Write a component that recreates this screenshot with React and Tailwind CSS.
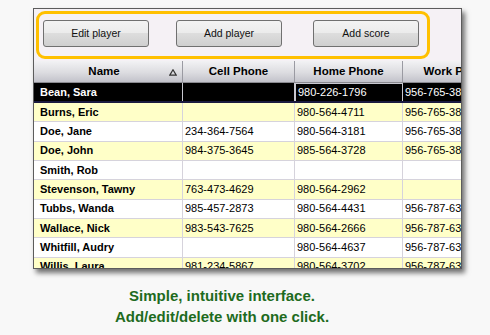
import React from "react";

const rows = [
  { name: "Bean, Sara", cell: "", home: "980-226-1796", work: "956-765-3812", selected: true },
  { name: "Burns, Eric", cell: "", home: "980-564-4711", work: "956-765-3812" },
  { name: "Doe, Jane", cell: "234-364-7564", home: "980-564-3181", work: "956-765-3812" },
  { name: "Doe, John", cell: "984-375-3645", home: "985-564-3728", work: "956-765-3812" },
  { name: "Smith, Rob", cell: "", home: "", work: "" },
  { name: "Stevenson, Tawny", cell: "763-473-4629", home: "980-564-2962", work: "" },
  { name: "Tubbs, Wanda", cell: "985-457-2873", home: "980-564-4431", work: "956-787-6390" },
  { name: "Wallace, Nick", cell: "983-543-7625", home: "980-564-2666", work: "956-787-6390" },
  { name: "Whitfill, Audry", cell: "", home: "980-564-4637", work: "956-787-6390" },
  { name: "Willis, Laura", cell: "981-234-5867", home: "980-564-3702", work: "956-787-6390" },
];

const WinButton = ({ label, className = "" }) => (
  <button className={`w-[106px] h-[27px] shrink-0 rounded-[3px] border border-[#707070] bg-[linear-gradient(to_bottom,#f3f3f3_0%,#ebebeb_50%,#dddddd_50%,#cfcfcf_100%)] text-[10.5px] text-[#111] ${className}`}>
    {label}
  </button>
);

const SortGlyph = () => (
  <svg width="8" height="7" viewBox="0 0 8 7" className="absolute right-[5px] top-[8px]">
    <path d="M4 0.8 L7.2 6.2 L0.8 6.2 Z" fill="none" stroke="#333" strokeWidth="1.2" />
  </svg>
);

export default function App() {
  return (
    <div
      className="w-[490px] h-[335px] overflow-hidden bg-[#f8f8f8] pt-[8px]"
      style={{ fontFamily: '"Liberation Sans", Arial, sans-serif' }}
    >
      {/* Window */}
      <div className="ml-[33px] w-[429px] h-[261px] border border-[#5c5c5c] shadow-[3px_4px_5px_rgba(0,0,0,0.55)] overflow-hidden flex flex-col bg-white">
        {/* Toolbar */}
        <div className="h-[52px] shrink-0 bg-[#f5f1f5] pt-[2px] pl-[2px]">
          <div className="w-[394px] h-[48px] rounded-[9px] border-[3px] border-[#ffc000] flex items-start pt-[6px] pl-[4px]">
            <WinButton label="Edit player" />
            <WinButton label="Add player" className="ml-[27px]" />
            <WinButton label="Add score" className="ml-[31px]" />
          </div>
        </div>

        {/* Header */}
        <div className="h-[22px] shrink-0 flex bg-[linear-gradient(to_bottom,#f2f2f4_0%,#dcdce0_55%,#c2c2ca_100%)] border-b border-[#8a8a90] text-[11.5px] font-bold text-black">
          <div className="relative w-[149px] shrink-0 border-r border-[#9a9aa2] flex items-center justify-center pr-[8px]">
            Name
            <SortGlyph />
          </div>
          <div className="w-[112px] shrink-0 border-r border-[#9a9aa2] flex items-center justify-center">Cell Phone</div>
          <div className="w-[108px] shrink-0 border-r border-[#9a9aa2] flex items-center justify-center">Home Phone</div>
          <div className="w-[108px] shrink-0 flex items-center justify-center">Work Phone</div>
        </div>

        {/* Rows */}
        {rows.map((r, i) => {
          const bg = r.selected ? "bg-black" : i % 2 === 1 ? "bg-[#ffffc8]" : "bg-white";
          const line = r.selected ? "border-[#c8c8d0]" : "border-[#d6d3dc]";
          return (
            <div
              key={r.name}
              className={`${r.selected ? "h-[20px] border-b-2 border-b-[#1a1a40]" : "h-[19.33px] border-b border-b-[#d6d3dc]"} shrink-0 flex ${bg} ${r.selected ? "text-white" : "text-black"} text-[11px] leading-none`}
            >
              <div className={`w-[149px] shrink-0 border-r ${line} pl-[6px] flex items-center font-bold`}>{r.name}</div>
              <div className={`w-[112px] shrink-0 border-r ${line} pl-[2px] flex items-center`}>{r.cell}</div>
              <div className={`w-[108px] shrink-0 border-r ${line} pl-[2px] flex items-center ${r.selected ? "border-t border-t-[#c8c8d0] border-l border-l-[#c8c8d0]" : ""}`}>{r.home}</div>
              <div className="w-[108px] shrink-0 pl-[2px] flex items-center">{r.work}</div>
            </div>
          );
        })}
      </div>

      {/* Caption */}
      <div className="w-[444px] mt-[16px] text-center text-[15px] leading-[21px] font-bold text-[#1e6b1e]">
        <p>Simple, intuitive interface.</p>
        <p>Add/edit/delete with one click.</p>
      </div>
    </div>
  );
}
